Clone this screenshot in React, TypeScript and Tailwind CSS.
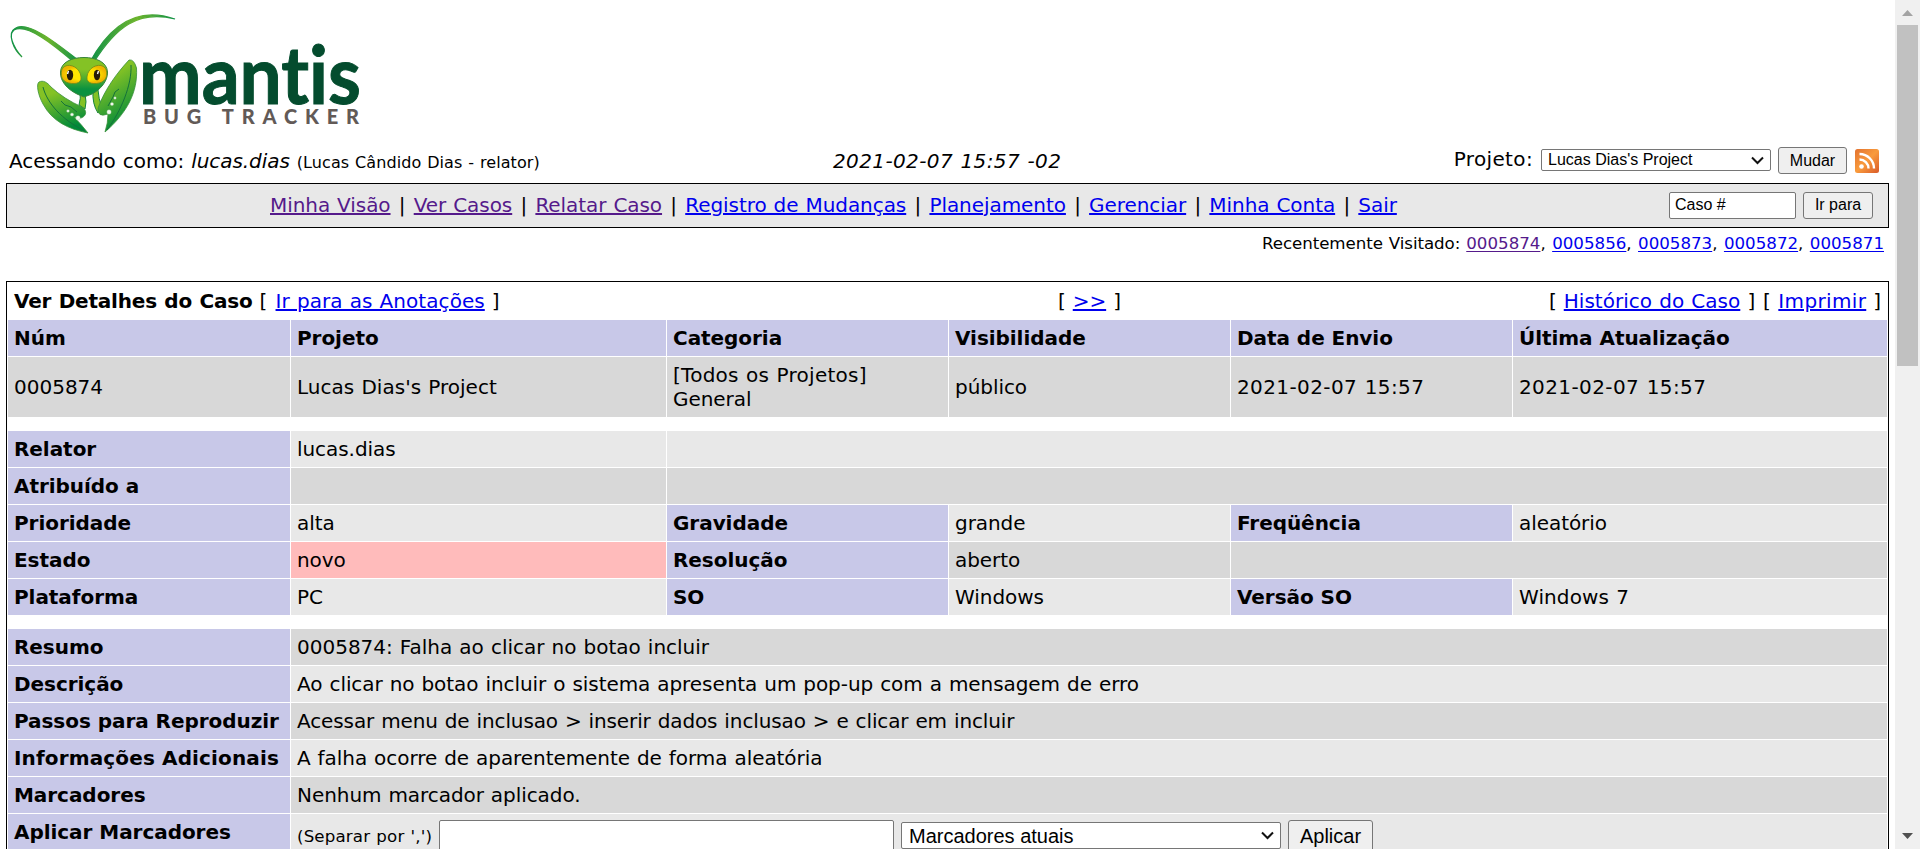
import React from 'react';

const cell = 'flex items-center px-[6px]';
const label = 'flex items-center px-[6px] bg-[#c8c8e8] font-bold whitespace-nowrap tracking-[-0.05px] [word-spacing:0px]';
const odd = 'bg-[#d8d8d8]';
const even = 'bg-[#e8e8e8]';
const grid = 'grid grid-cols-[282px_375px_281px_281px_281px_374px] gap-px leading-[24px]';
const link = 'text-[#0000ee] underline decoration-2 underline-offset-[1px]';
const visited = 'text-[#551a8b] underline decoration-2 underline-offset-[1px]';
const arial = "font-['Liberation_Sans',sans-serif] tracking-normal [word-spacing:0px]";
const button =
  'flex items-center justify-center rounded-[3px] border border-[#767676] bg-[#efefef] whitespace-nowrap';

const menu = [
  { text: 'Minha Visão', seen: true },
  { text: 'Ver Casos', seen: true },
  { text: 'Relatar Caso', seen: true },
  { text: 'Registro de Mudanças', seen: false },
  { text: 'Planejamento', seen: false },
  { text: 'Gerenciar', seen: false },
  { text: 'Minha Conta', seen: false },
  { text: 'Sair', seen: false },
];

const recent = ['0005874', '0005856', '0005873', '0005872', '0005871'];

const details = [
  { name: 'Resumo', value: '0005874: Falha ao clicar no botao incluir' },
  { name: 'Descrição', value: 'Ao clicar no botao incluir o sistema apresenta um pop-up com a mensagem de erro' },
  { name: 'Passos para Reproduzir', value: 'Acessar menu de inclusao > inserir dados inclusao > e clicar em incluir' },
  { name: 'Informações Adicionais', value: 'A falha ocorre de aparentemente de forma aleatória' },
  { name: 'Marcadores', value: 'Nenhum marcador aplicado.' },
];

function Logo() {
  return (
    <svg width="370" height="140" viewBox="0 0 370 140" className="block">
      <defs>
        <linearGradient id="claw" x1="0" y1="0" x2="0.35" y2="1">
          <stop offset="0.3" stopColor="#84c225" />
          <stop offset="1" stopColor="#008a3a" />
        </linearGradient>
        <linearGradient id="face" x1="0" y1="0" x2="0" y2="1">
          <stop offset="0.3" stopColor="#84c225" />
          <stop offset="0.8" stopColor="#0b923f" />
        </linearGradient>
        <linearGradient id="antenna" x1="0" y1="0" x2="1" y2="0">
          <stop offset="0" stopColor="#119247" />
          <stop offset="0.55" stopColor="#6cb42c" />
          <stop offset="1" stopColor="#129247" />
        </linearGradient>
        <radialGradient id="eye">
          <stop offset="0.6" stopColor="#ffe600" />
          <stop offset="1" stopColor="#eeb400" />
        </radialGradient>
      </defs>
      <path d="M22 57C13 49 8 35 14 30C27 23 54 45 75 63L78 60C55 42 27 20 15 28.500C7 33 13 47 22 57Z" fill="url(#antenna)" stroke="url(#antenna)" strokeWidth="1.200" />
      <path d="M90 62C110 25 138 6 175 19C138 10 116 27 94 62Z" fill="url(#antenna)" stroke="url(#antenna)" strokeWidth="1.200" />
      <path d="M80 92Q81 98 79 105L85 109Q87 102 85 94ZM93 90Q92 104 98 113L101 105Q99 100 98 90Z" fill="#84c225" stroke="#15833c" strokeWidth="1" />
      <path d="M39 82C43 80 47 82 51 87Q64 99 82 107C87 110 87 116 81 118L74 117Q81 124 88 133C68 129 52 121 43 104C38 95 36 84 39 82Z" fill="url(#claw)" stroke="#39913a" strokeWidth="0.8" />
      <path d="M129 60Q134 59 136.500 68C138 92 127 113 105 132Q108 123 108 114Q97 118 98 108C105 89 117 73 129 60Z" fill="url(#claw)" stroke="#39913a" strokeWidth="0.8" />
      <path d="M43 87C47 103 62 120 85 131M61 101Q64 106 71 107L77 112M131 65C132 85 121 111 107 130M119 89Q114 91 113 97L108 106" fill="none" stroke="#15713a" strokeWidth="1" />
      <path d="M60.500 72C61 62 72 57.500 84 57.500C96 57.500 107 62 107.500 72C108 81 100 90 92 94L84 97L77 94C67 89 60 81 60.500 72Z" fill="url(#face)" stroke="#35843a" strokeWidth="1" />
      <path d="M61.500 71C64 61 80 65 81 77C82 84 73 85 66 82C61 79 61 75 61.500 71ZM106.500 71C104 61 88 65 87 77C86 84 95 85 102 82C107 79 107 75 106.500 71Z" fill="url(#eye)" stroke="#6b8a1c" strokeWidth="0.8" />
      <ellipse cx="70" cy="75" rx="3.200" ry="5.200" fill="#241b08" />
      <ellipse cx="97" cy="75" rx="3.200" ry="5.200" fill="#241b08" />
      <path d="M68.500 71l-1 3M98.500 71l-1 3" stroke="#fff" strokeWidth="1.4" />
      <g fill="#f6faf2" stroke="#9ac79a" strokeWidth="0.4">
        <circle cx="68" cy="111" r="1.300" /><circle cx="72" cy="114.500" r="1.600" /><circle cx="78" cy="118" r="2.200" />
        <circle cx="109" cy="112" r="2.200" /><circle cx="112" cy="104" r="1.600" /><circle cx="115" cy="98" r="1.200" />
      </g>
      <text x="139" y="104" textLength="222" lengthAdjust="spacingAndGlyphs" fill="#044c2e" stroke="#044c2e" strokeWidth="1" className="font-['Lato',sans-serif] text-[81px] leading-none font-bold tracking-normal [font-variant-ligatures:none]">mantis</text>
      <text x="143" y="124" textLength="216" lengthAdjust="spacing" fill="#625a57" className="font-['Lato',sans-serif] text-[20px] leading-none font-black tracking-normal">BUG TRACKER</text>
    </svg>
  );
}

function Chevron() {
  return (
    <svg width="13" height="9" viewBox="0 0 13 9" fill="none" stroke="#111" strokeWidth="2">
      <path d="M1 1.500L6.500 7L12 1.500" />
    </svg>
  );
}

function Rss() {
  return (
    <svg width="24" height="24" viewBox="0 0 24 24">
      <defs>
        <linearGradient id="rss" x1="0" y1="0" x2="1" y2="1">
          <stop offset="0" stopColor="#e27230" />
          <stop offset="0.5" stopColor="#f99b3c" />
          <stop offset="1" stopColor="#d95a29" />
        </linearGradient>
      </defs>
      <rect width="24" height="24" rx="2.500" fill="url(#rss)" />
      <circle cx="6.500" cy="17.500" r="2.300" fill="#fff" />
      <path d="M4.500 10.500A9 9 0 0 1 13.500 19.500M4.500 5A14.500 14.500 0 0 1 19 19.500" fill="none" stroke="#fff" strokeWidth="2.400" />
    </svg>
  );
}

export default function App() {
  return (
    <div className="flex h-[849px] w-[1920px] overflow-hidden bg-white font-['DejaVu_Sans',sans-serif] text-[20px] leading-[24px] tracking-[-0.06px] text-black [word-spacing:0.7px]">
      <div className="w-[1895px] shrink-0">
        <Logo />
        <div className="grid h-[43px] grid-cols-[833px_400px_1fr] pt-[7px] whitespace-nowrap">
          <div className="pt-[2px] pl-[9px]">
            Acessando como: <i>lucas.dias</i> <span className="text-[16px] tracking-[0.08px]">(Lucas Cândido Dias - relator)</span>
          </div>
          <div className="pt-[2px] tracking-[0.38px]"><i>2021-02-07 15:57 -02</i></div>
          <div className="flex items-start justify-end pr-[16px]">
            <span className="mr-[8px] tracking-[0.35px]">Projeto:</span>
            <div className={`${arial} mt-[2px] mr-[7px] flex h-[22px] w-[230px] items-center justify-between rounded-[2px] border border-[#767676] bg-white pr-[6px] pl-[6px] text-[16px]`}>
              Lucas Dias's Project
              <Chevron />
            </div>
            <div className={`${arial} ${button} mr-[8px] h-[27px] w-[69px] text-[16px]`}>Mudar</div>
            <div className="pt-[2px]"><Rss /></div>
          </div>
        </div>
        <div className="ml-[6px] flex h-[45px] w-[1883px] items-center justify-between border border-black bg-[#e8e8e8] pr-[15px]">
          <div className="flex pb-px pl-[263px]">
            {menu.map((m, i) => (
              <React.Fragment key={m.text}>
                {i > 0 && <span className="w-[23.200px] text-center">|</span>}
                <a className={m.seen ? visited : link}>{m.text}</a>
              </React.Fragment>
            ))}
          </div>
          <div className={`${arial} flex gap-[7px] text-[16px]`}>
            <div className="flex h-[27px] w-[127px] items-center rounded-[2px] border border-[#767676] bg-white pb-[2px] pl-[5px]">Caso #</div>
            <div className={`${button} h-[27px] w-[70px] pb-[2px]`}>Ir para</div>
          </div>
        </div>
        <div className="h-[53px] pt-[4px] pr-[11px] text-right text-[16.667px]">
          Recentemente Visitado:{' '}
          {recent.map((r, i) => (
            <React.Fragment key={r}>
              {i > 0 && <span className="tracking-[0.2px]">, </span>}
              <a className={`${i === 0 ? 'text-[#551a8b]' : 'text-[#0000ee]'} tracking-normal underline decoration-1 underline-offset-[2px]`}>{r}</a>
            </React.Fragment>
          ))}
        </div>
        <div className="ml-[6px] h-[600px] w-[1883px] border border-black px-px">
          <div className="grid h-[38px] grid-cols-[1044px_1fr_auto] items-center px-[6px]">
            <div><b className="tracking-[-0.2px]">Ver Detalhes do Caso</b> <span className="tracking-[0.6px]">[ </span><a className={`${link} tracking-[0.06px]`}>Ir para as Anotações</a> ]</div>
            <div>[ <a className={link}>&gt;&gt;</a> ]</div>
            <div>[ <a className={`${link} tracking-[0.03px]`}>Histórico do Caso</a><span className="tracking-[0.25px]"> ] [ </span><a className={`${link} tracking-[0.35px]`}>Imprimir</a> ]</div>
          </div>
          <div className={`${grid} auto-rows-[36px]`}>
            <div className={label}>Núm</div>
            <div className={label}>Projeto</div>
            <div className={label}>Categoria</div>
            <div className={label}>Visibilidade</div>
            <div className={label}>Data de Envio</div>
            <div className={label}>Última Atualização</div>
          </div>
          <div className={`${grid} mt-px h-[60px]`}>
            <div className={`${cell} ${odd} tracking-normal`}>0005874</div>
            <div className={`${cell} ${odd} tracking-[0.03px]`}>Lucas Dias's Project</div>
            <div className={`${cell} ${odd}`}>
              <div>
                <div className="tracking-[0.26px]">[Todos os Projetos]</div>
                <div>General</div>
              </div>
            </div>
            <div className={`${cell} ${odd}`}>público</div>
            <div className={`${cell} ${odd} tracking-[0.4px]`}>2021-02-07 15:57</div>
            <div className={`${cell} ${odd} tracking-[0.4px]`}>2021-02-07 15:57</div>
          </div>
          <div className={`${grid} mt-[14px] auto-rows-[36px]`}>
            <div className={label}>Relator</div>
            <div className={`${cell} ${even}`}>lucas.dias</div>
            <div className={`${cell} ${even} col-span-4`} />
            <div className={label}>Atribuído a</div>
            <div className={`${cell} ${odd}`} />
            <div className={`${cell} ${odd} col-span-4`} />
            <div className={label}>Prioridade</div>
            <div className={`${cell} ${even}`}>alta</div>
            <div className={label}>Gravidade</div>
            <div className={`${cell} ${even}`}>grande</div>
            <div className={label}>Freqüência</div>
            <div className={`${cell} ${even}`}>aleatório</div>
            <div className={label}>Estado</div>
            <div className={`${cell} bg-[#ffbbbb]`}>novo</div>
            <div className={label}>Resolução</div>
            <div className={`${cell} ${odd}`}>aberto</div>
            <div className={`${cell} ${odd} col-span-2`} />
            <div className={label}>Plataforma</div>
            <div className={`${cell} ${even}`}>PC</div>
            <div className={label}>SO</div>
            <div className={`${cell} ${even}`}>Windows</div>
            <div className={label}>Versão SO</div>
            <div className={`${cell} ${even} tracking-[0.1px]`}>Windows 7</div>
          </div>
          <div className={`${grid} mt-[14px] auto-rows-[36px]`}>
            {details.map((d, i) => (
              <React.Fragment key={d.name}>
                <div className={label}>
                  <span className={i === 3 ? 'tracking-[0.14px]' : ''}>{d.name}</span>
                </div>
                <div className={`${cell} ${i % 2 ? even : odd} col-span-5`}>
                  <span className={i === 2 ? 'tracking-[-0.11px]' : i === 0 ? 'tracking-normal' : ''}>{d.value}</span>
                </div>
              </React.Fragment>
            ))}
            <div className={label}>Aplicar Marcadores</div>
            <div className={`${even} col-span-5 flex items-start pt-[6px] pl-[6px]`}>
              <span className="w-[142px] pt-[5px] text-[16.667px] tracking-[0.15px] whitespace-nowrap">(Separar por ',')</span>
              <div className="mr-[7px] h-[32px] w-[455px] rounded-[2px] border border-[#767676] bg-white" />
              <div className={`${arial} mt-[2px] mr-[7px] flex h-[27px] w-[380px] items-center justify-between rounded-[2px] border border-[#767676] bg-white pr-[6px] pl-[7px]`}>
                Marcadores atuais
                <Chevron />
              </div>
              <div className={`${arial} ${button} h-[32px] w-[85px]`}>Aplicar</div>
            </div>
          </div>
        </div>
      </div>
      <div className="flex w-[25px] shrink-0 flex-col items-center bg-[#f0f0f0] pt-[10px] pb-[10px]">
        <svg width="11" height="6" viewBox="0 0 11 6"><path d="M5.500 0L11 6H0Z" fill="#a3a3a3" /></svg>
        <div className="mt-[9px] h-[341px] w-[21px] bg-[#c1c1c1]" />
        <svg width="11" height="6" viewBox="0 0 11 6" className="mt-auto"><path d="M0 0H11L5.500 6Z" fill="#505050" /></svg>
      </div>
    </div>
  );
}
